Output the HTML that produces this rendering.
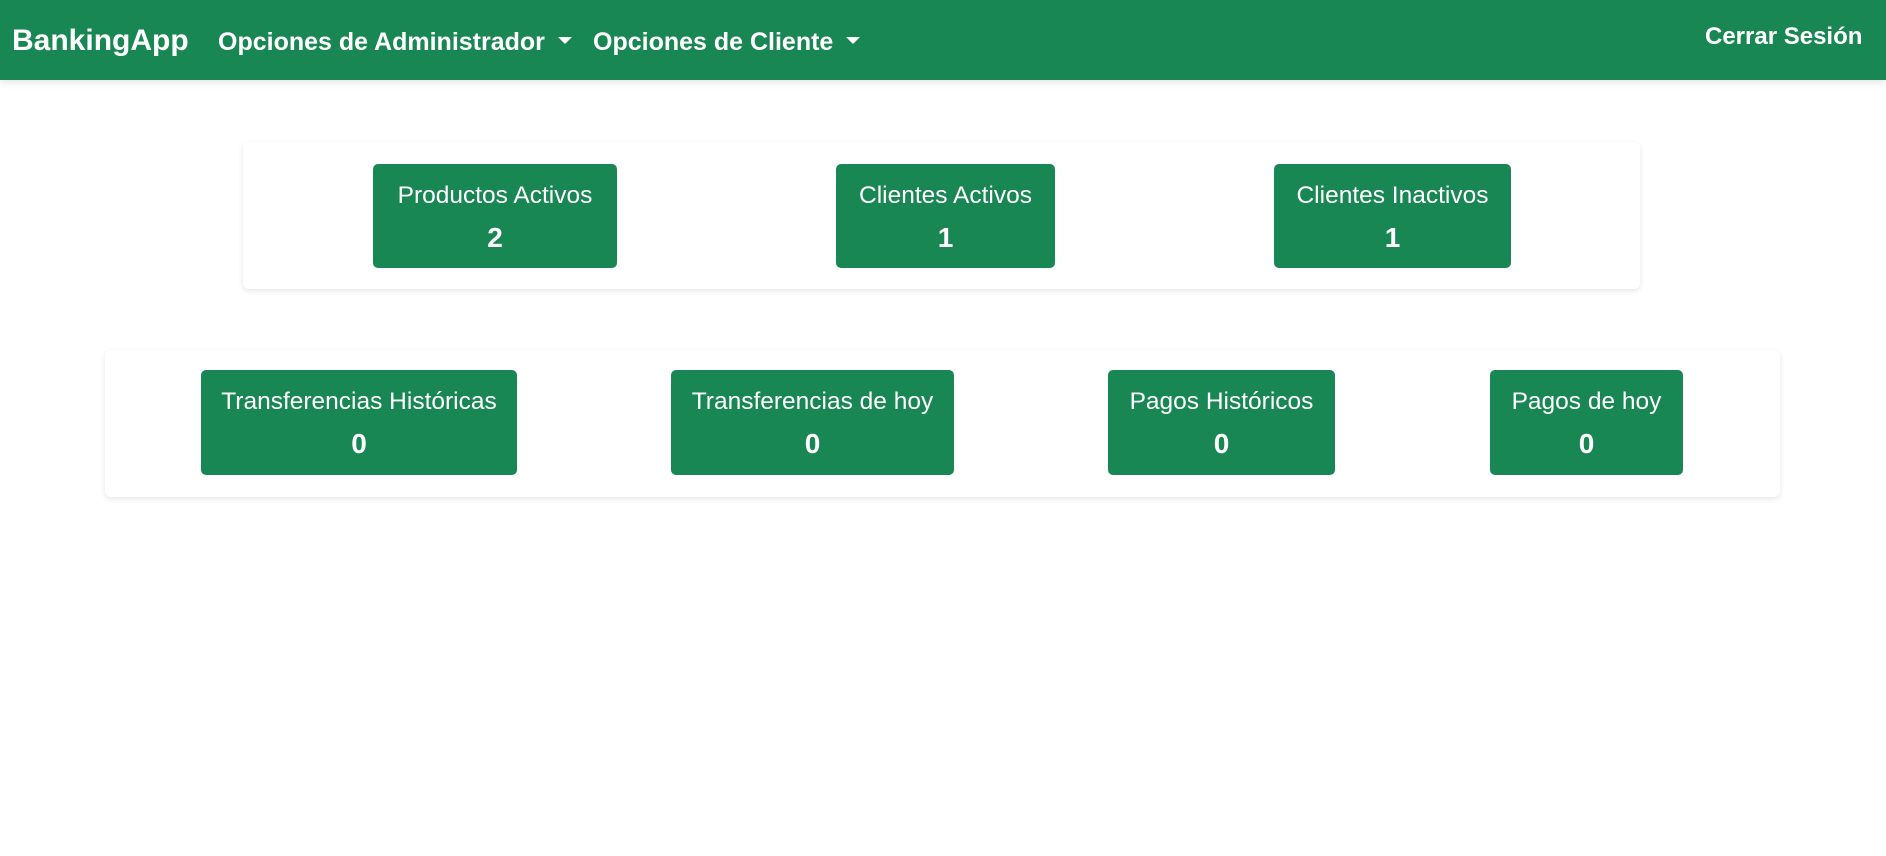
<!DOCTYPE html>
<html><head><meta charset="utf-8"><style>
*{margin:0;padding:0;box-sizing:border-box}
body{width:1886px;height:856px;background:#fff;font-family:"Liberation Sans",sans-serif;position:relative;overflow:hidden}
.nav{position:absolute;left:0;top:0;width:1886px;height:80px;background:#198754;box-shadow:0 2px 8px rgba(0,0,0,.12)}
.t{position:absolute;color:#fff;font-weight:bold;white-space:nowrap}
.caret{display:inline-block;width:0;height:0;border-left:7px solid transparent;border-right:7px solid transparent;border-top:7px solid #fff;vertical-align:middle;margin-left:13px;position:relative;top:-3px}
.card{position:absolute;background:#fff;border-radius:6px;box-shadow:0 2px 6px rgba(0,0,0,.1)}
.box{position:absolute;background:#198754;border-radius:5px;color:#fff;text-align:center}
.box .l{position:absolute;left:-20px;right:-20px;top:18px;font-size:24.5px;white-space:nowrap}
.box .n{position:absolute;left:0;right:0;top:58px;font-size:28px;font-weight:bold}
</style></head><body>
<div class="nav">
<div class="t" style="left:12px;top:24px;font-size:30px">BankingApp</div>
<div class="t" style="left:218px;top:28px;font-size:25px">Opciones de Administrador<span class="caret"></span></div>
<div class="t" style="left:593px;top:28px;font-size:25px">Opciones de Cliente<span class="caret"></span></div>
<div class="t" style="left:1705px;top:23px;font-size:24px">Cerrar Sesión</div>
</div>
<div class="card" style="left:243px;top:142px;width:1397px;height:147px"></div>
<div class="box" style="left:373px;top:164px;width:244px;height:104px"><div class="l">Productos Activos</div><div class="n">2</div></div>
<div class="box" style="left:836px;top:164px;width:219px;height:104px"><div class="l">Clientes Activos</div><div class="n">1</div></div>
<div class="box" style="left:1274px;top:164px;width:237px;height:104px"><div class="l">Clientes Inactivos</div><div class="n">1</div></div>
<div class="card" style="left:105px;top:350px;width:1675px;height:147px"></div>
<div class="box" style="left:201px;top:370px;width:316px;height:105px"><div class="l">Transferencias Históricas</div><div class="n">0</div></div>
<div class="box" style="left:671px;top:370px;width:283px;height:105px"><div class="l">Transferencias de hoy</div><div class="n">0</div></div>
<div class="box" style="left:1108px;top:370px;width:227px;height:105px"><div class="l">Pagos Históricos</div><div class="n">0</div></div>
<div class="box" style="left:1490px;top:370px;width:193px;height:105px"><div class="l">Pagos de hoy</div><div class="n">0</div></div>
</body></html>
